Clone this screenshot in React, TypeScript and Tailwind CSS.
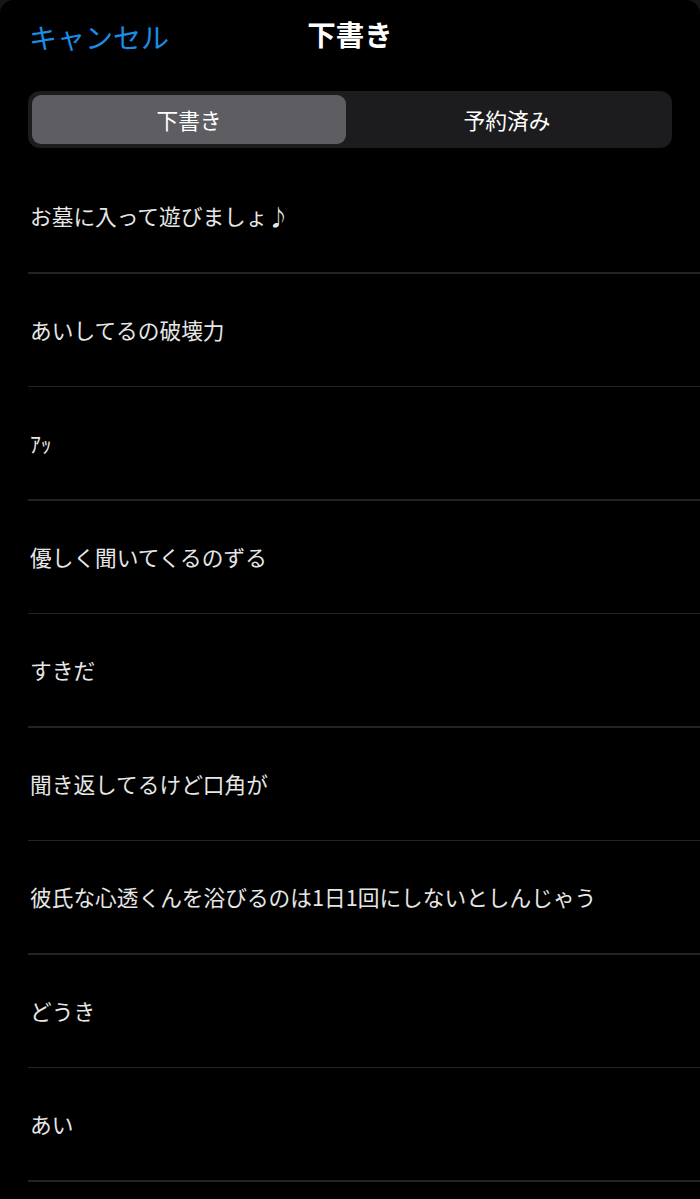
import React from 'react';

const DRAFTS = [
  'お墓に入って遊びましょ♪',
  'あいしてるの破壊力',
  'ｱｯ',
  '優しく聞いてくるのずる',
  'すきだ',
  '聞き返してるけど口角が',
  '彼氏な心透くんを浴びるのは1日1回にしないとしんじゃう',
  'どうき',
  'あい',
];

const FONT = { fontFamily: '"Noto Sans CJK JP", "Noto Sans", sans-serif' };

const App: React.FC = () => {
  return (
    <div className="min-h-[1199px] w-[700px] bg-[#161616] overflow-hidden" style={FONT}>
      <div className="min-h-[1199px] bg-black rounded-t-[14px]">
        <header className="relative h-[76px] flex items-center px-[29px]">
          <button className="text-[28px] leading-none text-[#1b8de6] pb-[2px]">キャンセル</button>
          <h1 className="absolute left-1/2 -translate-x-1/2 top-[20px] text-[28.5px] leading-none font-bold text-white">
            下書き
          </h1>
        </header>

        <div className="mt-[15px] mx-[28px] h-[57px] rounded-[12px] bg-[#1c1c1e] p-[4px] flex">
          <button className="w-[314px] rounded-[9px] bg-[#5d5d62] text-white text-[21.7px] leading-none">下書き</button>
          <button className="flex-1 text-white text-[21.7px] leading-none">予約済み</button>
        </div>

        <ul className="mt-[12px] pl-[28px]">
          {DRAFTS.map((text, i) => (
            <li key={i} className="h-[113.5px] flex flex-col">
              <div className="flex-1 flex items-center pl-[2px] text-[21.7px] leading-none text-[#e6e6e6]">{text}</div>
              <div className="h-[1.5px] bg-[#232325]" />
            </li>
          ))}
        </ul>
      </div>
    </div>
  );
};

export default App;
